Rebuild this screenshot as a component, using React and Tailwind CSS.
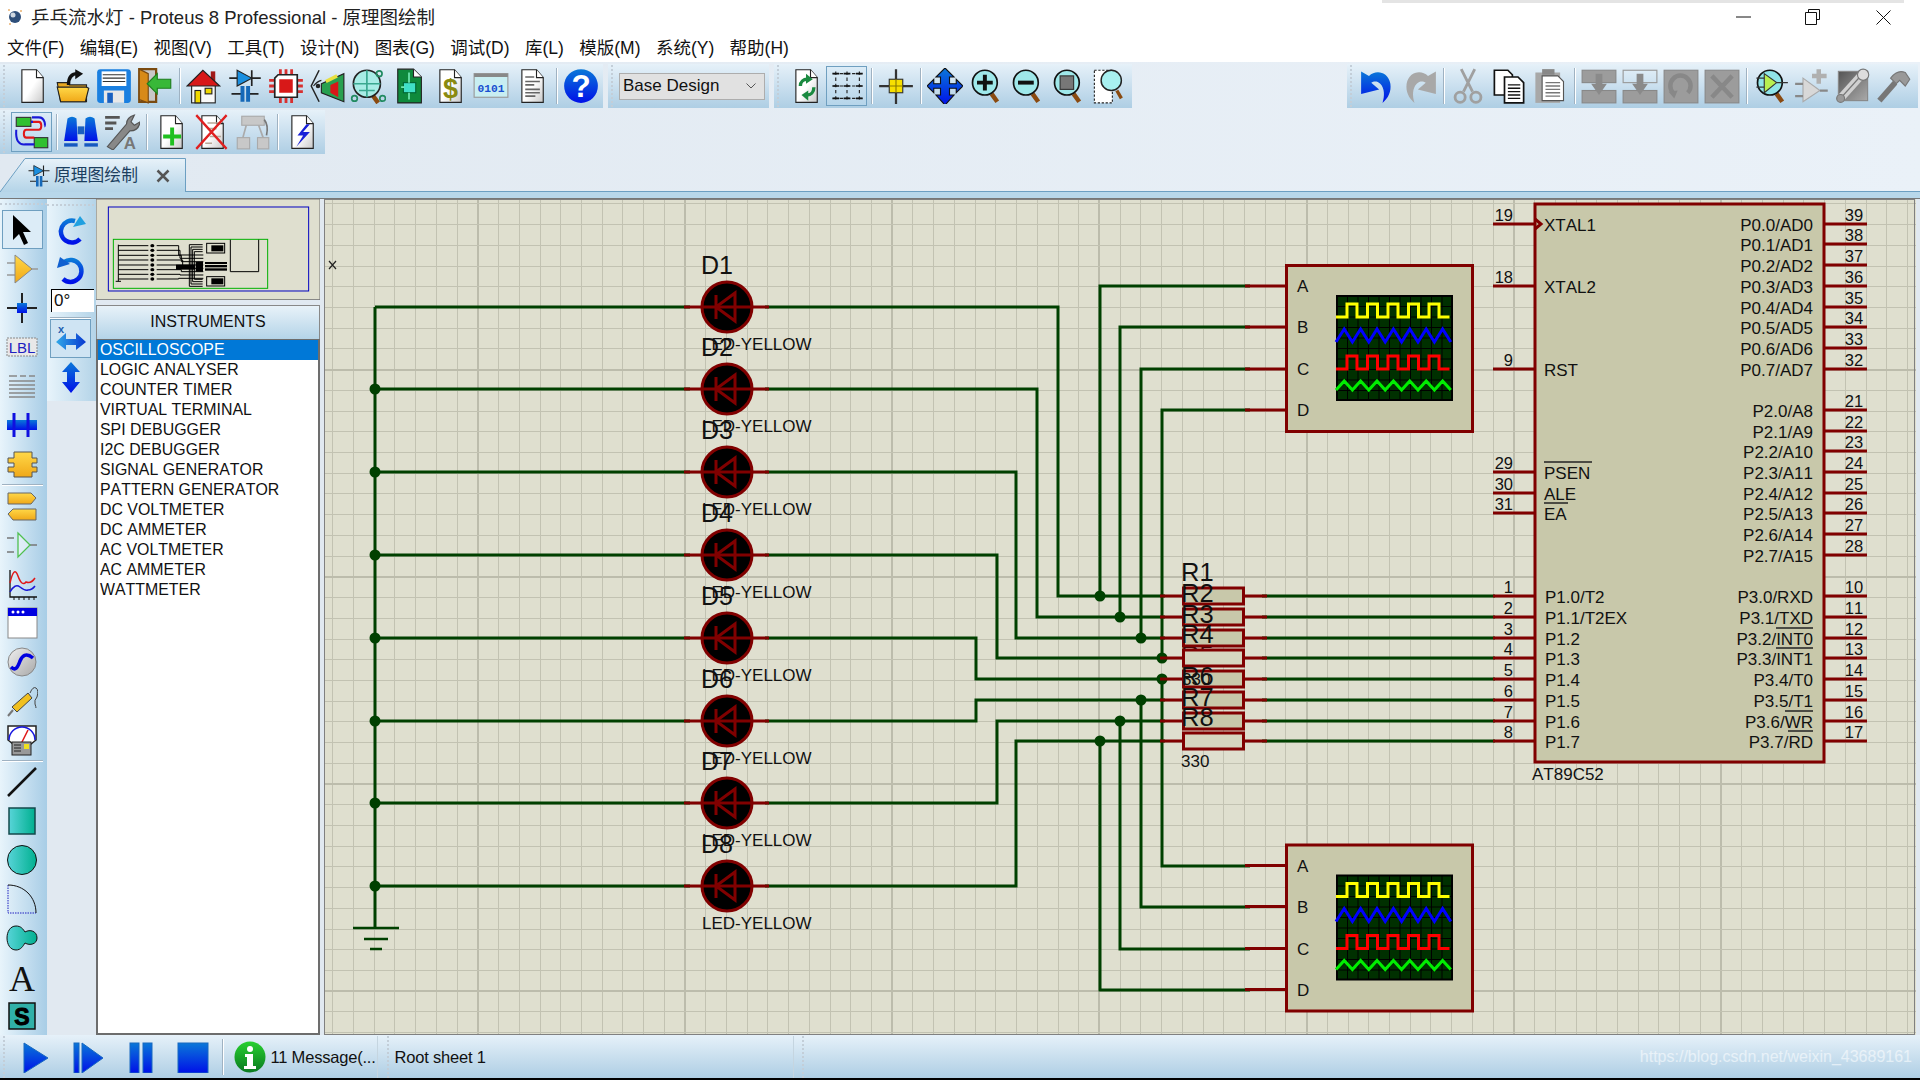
import React from 'react'
import clsx from 'clsx'

const RED = '#800000'
const GREEN = '#004000'

const Ic = ({ children, s = 32 }) => (
  <svg width={s} height={s} viewBox="0 0 32 32" className="shrink-0">{children}</svg>
)

const Page = ({ children }) => (
  <>
    <path d="M7 1.500h13l6 7v22H7z" fill="url(#gPage)" stroke="#222" strokeWidth="1" />
    <path d="M20 1.500v7h6" fill="#fff" stroke="#222" strokeWidth="1" />
    {children}
  </>
)

const Glass = ({ children, fill = '#9fe8ea' }) => (
  <>
    <path d="M21 23l5 7" stroke="#8a4a10" strokeWidth="4" />
    <circle cx="15" cy="13" r="11" fill={fill} stroke="#111" strokeWidth="1.500" />
    {children}
  </>
)

const Schem = () => (
  <>
    <path d="M2 9h28M4 23h9M19 23h9M22 2v14" stroke="#222" strokeWidth="1.500" fill="none" />
    <path d="M9 2l13 7-13 7z" fill="#1a8fe0" stroke="#222" />
    <rect x="12" y="16" width="3.500" height="14" fill="#1568b8" />
    <rect x="17" y="16" width="3.500" height="14" fill="#1568b8" />
  </>
)

const icons = {
  newDoc: <Page />,
  open: (
    <>
      <path d="M2 13h9l2 2h15v15H5z" fill="#e8a820" stroke="#222" />
      <path d="M2 17h26l2 1-3 12H5z" fill="url(#gYel)" stroke="#222" />
      <path d="M12 15c0-7 3-10 8-10" stroke="#111" strokeWidth="3" fill="none" />
      <path d="M18 1l7 4-7 5z" fill="#111" />
    </>
  ),
  save: (
    <>
      <rect x="1" y="1" width="30" height="30" rx="3" fill="#1a7fe0" />
      <rect x="5" y="3" width="22" height="13" fill="#fff" />
      <path d="M6 6h20M6 9h20M6 12h20" stroke="#333" strokeWidth="1" />
      <rect x="7" y="20" width="18" height="11" fill="#e8e8e8" />
      <rect x="10" y="22" width="5" height="9" fill="#1a60c0" />
    </>
  ),
  importBook: (
    <>
      <path d="M2 1h15v29H2z" fill="#c8c8c8" stroke="#7a4a10" strokeWidth="2" />
      <path d="M2 1l8 4v26l-8-3z" fill="#d88a18" stroke="#7a4a10" />
      <path d="M30 10v8H18v5L9 14l9-9v5z" fill="#38b838" stroke="#1e7e1e" />
    </>
  ),
  home: (
    <>
      <rect x="22" y="3" width="4" height="9" fill="#a01818" />
      <rect x="5" y="15" width="21" height="16" fill="#f8f8f8" stroke="#222" />
      <path d="M1 16L15 2l15 14z" fill="#d81818" stroke="#222" />
      <rect x="8" y="20" width="5" height="11" fill="#f0d800" stroke="#222" />
      <rect x="17" y="18" width="6" height="5" fill="#f0d800" stroke="#222" />
    </>
  ),
  schem: <Schem />,
  chip: (
    <>
      <path d="M11 1v6M16 1v6M21 1v6M11 25v6M16 25v6M21 25v6M1 11h6M1 16h6M1 21h6M25 11h6M25 16h6M25 21h6" stroke="#d83030" strokeWidth="2.500" />
      <path d="M9 6h17v20H6V9z" fill="#fff" stroke="#222" strokeWidth="1.500" />
      <rect x="10" y="10" width="12" height="12" fill="#d81818" />
    </>
  ),
  view3d: (
    <>
      <path d="M9 2L2 16l7 14" fill="none" stroke="#222" strokeWidth="1.300" />
      <path d="M4 16q3-4 7-5" fill="none" stroke="#222" />
      <circle cx="8" cy="16" r="2" fill="#222" />
      <path d="M11 14L31 5v25l-20-8z" fill="#28a050" stroke="#222" />
      <path d="M19 15l7-3v14l-7-4z" fill="#d81818" />
      <path d="M15 12l10-5" stroke="#e8e040" strokeWidth="3" />
    </>
  ),
  inspect: (
    <>
      <path d="M20 24l5 7" stroke="#8a4a10" strokeWidth="4" />
      <circle cx="15" cy="14" r="12" fill="#a8ece6" stroke="#222" strokeWidth="1.500" />
      <path d="M15 2v24M3 14h24M8 20h14" stroke="#3aa890" strokeWidth="1.500" />
      <circle cx="26" cy="5" r="2.500" fill="none" stroke="#208a60" strokeWidth="1.500" />
      <circle cx="4" cy="27" r="2.500" fill="none" stroke="#208a60" strokeWidth="1.500" />
      <circle cx="29" cy="27" r="2.500" fill="none" stroke="#208a60" strokeWidth="1.500" />
    </>
  ),
  pcbDoc: (
    <>
      <path d="M6 1h14l7 7v23H6z" fill="#0f8a3c" stroke="#222" />
      <path d="M20 1v7h7" fill="#fff" stroke="#222" />
      <rect x="11" y="13" width="11" height="9" fill="#40e0c8" stroke="#063" />
      <path d="M16 4v9M16 22v6M9 17h3" stroke="#70e8b0" strokeWidth="1.500" />
    </>
  ),
  bom: (
    <Page>
      <text x="16.500" y="27" fontSize="24" fontWeight="700" fill="#8a8a10" textAnchor="middle">$</text>
    </Page>
  ),
  binary: (
    <>
      <rect x="1" y="5" width="30" height="21" fill="#c8eef2" stroke="#999" />
      <rect x="1" y="5" width="30" height="3" fill="#888" />
      <text x="16" y="21" fontSize="10" fontWeight="700" fill="#1a50d0" textAnchor="middle" fontFamily="Liberation Mono">0101</text>
    </>
  ),
  notes: (
    <Page>
      <path d="M10 8h8M10 12h13M10 15h8M10 19h13M10 22h13M10 25h9" stroke="#666" strokeWidth="1.500" />
    </Page>
  ),
  help: (
    <>
      <circle cx="16" cy="16" r="15" fill="url(#gBlue)" />
      <text x="16" y="26" fontSize="28" fontWeight="700" fill="#fff" textAnchor="middle">?</text>
    </>
  ),
  refresh: (
    <Page>
      <path d="M11 16c0-4 3-6 6-6" stroke="#1a8a40" strokeWidth="3" fill="none" />
      <path d="M16 5l6 5-6 4z" fill="#1a8a40" />
      <path d="M23 17c0 5-3 7-6 7" stroke="#1a8a40" strokeWidth="3" fill="none" />
      <path d="M18 29l-6-5 6-4z" fill="#1a8a40" />
    </Page>
  ),
  grid: (
    <>
      <path d="M4 5h26M4 16h26M4 27h26M6 3v26M16 3v26M27 3v26" stroke="#222" strokeWidth="1" strokeDasharray="3 2.500" />
      <path d="M3 5h6M13 5h6M24 5h6M3 16h6M13 16h6M24 16h6M3 27h6M13 27h6M24 27h6" stroke="#111" strokeWidth="1.500" />
    </>
  ),
  origin: (
    <>
      <path d="M16 1v31M1 16h30" stroke="#333" strokeWidth="2" />
      <rect x="10" y="10" width="12" height="12" fill="#f8e000" stroke="#333" />
      <path d="M16 10v12M10 16h12" stroke="#8a7a00" />
    </>
  ),
  pan: (
    <path d="M16 0l8 8h-4v6h6v-4l6 6-6 6v-4h-6v6h4l-8 9-8-9h4v-6H6v4l-6-6 6-6v4h6V8H8z" fill="url(#gBlue)" stroke="#111" />
  ),
  zoomIn: (
    <Glass>
      <path d="M15 6v14M8 13h14" stroke="#111" strokeWidth="3.500" />
    </Glass>
  ),
  zoomOut: (
    <Glass>
      <path d="M8 13h14" stroke="#111" strokeWidth="3.500" />
    </Glass>
  ),
  zoomAll: (
    <Glass>
      <rect x="9" y="7" width="12" height="12" fill="#777" stroke="#333" />
    </Glass>
  ),
  zoomArea: (
    <>
      <rect x="3" y="2" width="16" height="29" fill="#fff" stroke="#222" strokeDasharray="2 1.500" />
      <path d="M23 20l4 7" stroke="#8a4a10" strokeWidth="3" />
      <circle cx="18" cy="11" r="9" fill="#a8f0f0" stroke="#222" strokeWidth="1.300" />
    </>
  ),
  undo: (
    <path d="M1 23V3l7 4C14 1 25 3 27 14c1 7-2 13-7 17 2-6 2-13-2-17-3-3-6-2-8-1l7 6z" fill="url(#gBlue)" />
  ),
  redo: (
    <path d="M31 23V3l-7 4C18 1 7 3 5 14c-1 7 2 13 7 17-2-6-2-13 2-17 3-3 6-2 8-1l-7 6z" fill="#a8a8a8" />
  ),
  cut: (
    <g stroke="#a0a0a0" strokeWidth="2.500" fill="none">
      <path d="M10 1l10 20M22 1L12 21" />
      <ellipse cx="9" cy="26" rx="4.500" ry="4.500" />
      <ellipse cx="23" cy="26" rx="4.500" ry="4.500" />
    </g>
  ),
  copy: (
    <>
      <path d="M3 2h12l4 4v18H3z" fill="#fff" stroke="#111" strokeWidth="1.500" />
      <path d="M12 8h12l5 5v18H12z" fill="#fff" stroke="#111" strokeWidth="1.500" />
      <path d="M15 15h11M15 18h11M15 21h11M15 24h11M15 27h11" stroke="#111" strokeWidth="1.300" />
    </>
  ),
  paste: (
    <>
      <rect x="3" y="4" width="22" height="27" fill="#a8a8a8" />
      <rect x="9" y="1" width="11" height="5" fill="#888" />
      <path d="M9 7h14l5 5v17H9z" fill="#fff" stroke="#555" />
      <path d="M12 13h13M12 16h13M12 19h13M12 22h13M12 25h13" stroke="#777" strokeWidth="1.300" />
    </>
  ),
  blockCopy: (
    <>
      <rect x="1" y="2" width="30" height="11" fill="#9c9c9c" stroke="#888" />
      <rect x="1" y="20" width="30" height="11" fill="#9c9c9c" stroke="#888" />
      <path d="M13 5h6v9h4l-7 10-7-10h4z" fill="#8a8a8a" />
    </>
  ),
  blockMove: (
    <>
      <rect x="1" y="2" width="30" height="11" fill="none" stroke="#999" />
      <rect x="1" y="20" width="30" height="11" fill="#9c9c9c" stroke="#888" />
      <path d="M13 5h6v9h4l-7 10-7-10h4z" fill="#8a8a8a" />
    </>
  ),
  blockRotate: (
    <>
      <rect x="1" y="2" width="30" height="29" fill="#9c9c9c" stroke="#888" />
      <path d="M9 22A9 9 0 1 1 22 22" fill="none" stroke="#888" strokeWidth="4" />
      <path d="M5 21l8-1-3 7z" fill="#888" />
    </>
  ),
  blockDelete: (
    <>
      <rect x="1" y="2" width="30" height="29" fill="#9c9c9c" stroke="#888" />
      <path d="M7 7l18 19M25 7L7 26" stroke="#888" strokeWidth="4" />
    </>
  ),
  pick: (
    <Glass fill="#90e4e8">
      <path d="M10 5l11 8-11 9z" fill="#b8f050" stroke="#333" />
      <path d="M3 9h7M3 17h7M21 13h10" stroke="#333" />
    </Glass>
  ),
  makeDevice: (
    <>
      <path d="M8 9l15 11L8 30z" fill="#d8d8d8" stroke="#aaa" />
      <path d="M1 14h7M1 25h7M23 20h7" stroke="#888" strokeWidth="2" />
      <path d="M22 1v13M16 7h13" stroke="#b0b0b0" strokeWidth="4" />
    </>
  ),
  makePkg: (
    <>
      <rect x="3" y="3" width="26" height="26" fill="url(#gGray)" stroke="#888" />
      <path d="M4 28L22 8" stroke="#d0d0d0" strokeWidth="7" />
      <path d="M4 28L22 8" stroke="#777" strokeWidth="1" />
      <circle cx="25" cy="6" r="5" fill="#ddd" stroke="#777" />
      <circle cx="5" cy="27" r="3.500" fill="#999" stroke="#777" />
    </>
  ),
  decompose: (
    <>
      <path d="M3 29L17 13" stroke="#777" strokeWidth="5" />
      <path d="M13 9q6-8 13-5l4 6-4 6-5-5-3 3z" fill="#999" stroke="#777" />
    </>
  ),
  sheets: (
    <>
      <rect x="2" y="3" width="13" height="8" fill="#30c030" stroke="#333" />
      <rect x="18" y="21" width="12" height="9" fill="#30c030" stroke="#333" />
      <path d="M15 7h7c3 0 3 7 0 7H11c-3 0-3 7 0 7h7" fill="none" stroke="#e01818" strokeWidth="1.800" />
      <path d="M16 6v2M2 14q-1 14 8 13h8" fill="none" stroke="#1818d8" strokeWidth="1.800" />
      <path d="M16 3h6c6 0 6 8 5 8" fill="none" stroke="#1818d8" strokeWidth="1.800" />
    </>
  ),
  binoculars: (
    <>
      <path d="M4 4q4-3 8 0l1 20H1z" fill="url(#gBlue)" />
      <path d="M20 4q4-3 8 0l3 20H19z" fill="url(#gBlue)" />
      <rect x="13" y="11" width="6" height="7" fill="#1a5fc0" />
      <rect x="1" y="26" width="12" height="3" fill="#1558c0" />
      <rect x="19" y="26" width="12" height="3" fill="#1558c0" />
    </>
  ),
  wrenchA: (
    <>
      <path d="M1 3h13M1 8h10M1 13h7" stroke="#555" strokeWidth="2.500" />
      <path d="M3 29L20 9q0-6 7-8l-3 6 3 3 5-3q-1 8-9 8L8 32z" fill="#888" stroke="#555" />
      <text x="23" y="31" fontSize="15" fontWeight="700" fill="#777" textAnchor="middle">A</text>
    </>
  ),
  addSheet: (
    <Page>
      <path d="M17 12v16M9 20h16" stroke="#20c020" strokeWidth="3.500" />
    </Page>
  ),
  delSheet: (
    <Page>
      <path d="M12 8h12M12 13h8M14 20h10M10 26h6" stroke="#b8a898" strokeWidth="1.500" />
      <path d="M2 1l27 30M29 1L2 31" stroke="#e02020" strokeWidth="2" />
    </Page>
  ),
  tree: (
    <>
      <rect x="6" y="2" width="20" height="8" fill="#c8c8c8" stroke="#aaa" />
      <rect x="2" y="21" width="11" height="10" fill="#c8c8c8" stroke="#aaa" />
      <rect x="20" y="21" width="10" height="10" fill="#c8c8c8" stroke="#aaa" />
      <path d="M10 10l-3 11M21 10l4 11" stroke="#aaa" strokeWidth="1.500" />
      <path d="M26 5q4 5 2 14" fill="none" stroke="#777" strokeWidth="1.500" />
    </>
  ),
  bolt: (
    <Page>
      <path d="M20 9l-8 10h5l-6 10 12-13h-6l6-7z" fill="#1820d8" />
    </Page>
  ),
  select: <path d="M7 1v25l6-6 5 11 4-2-5-11h8z" fill="#000" />,
  component: (
    <>
      <path d="M1 10h8M1 22h8M25 16h7" stroke="#999" strokeWidth="1.500" />
      <path d="M9 2l17 14L9 30z" fill="url(#gYel)" stroke="#888" />
    </>
  ),
  junction: (
    <>
      <path d="M16 1v30M1 16h30" stroke="#222" strokeWidth="2" />
      <rect x="11" y="11" width="10" height="10" fill="url(#gBlue)" />
    </>
  ),
  lbl: (
    <>
      <rect x="1" y="7" width="30" height="18" fill="#e8e8e8" stroke="#888" strokeDasharray="2 1" />
      <text x="16" y="22" fontSize="15" fill="#2020c0" textAnchor="middle">LBL</text>
    </>
  ),
  script: <path d="M3 6h8M14 6h6M23 6h6M3 11h26M3 15h26M3 19h26M3 23h26M3 27h26" stroke="#888" strokeWidth="1.500" />,
  bus: (
    <>
      <rect x="1" y="11" width="30" height="10" fill="url(#gBlue)" />
      <path d="M8 4v24M22 4v24" stroke="#1010e0" strokeWidth="3" />
    </>
  ),
  subckt: <path d="M8 4h18v6h5v5h-5v4h5v5h-5v5H8v-5H2v-5h6v-4H2v-5h6z" fill="url(#gYel)" stroke="#555" />,
  terminal: (
    <>
      <path d="M2 3h23l5 5-5 6H2z" fill="url(#gYel)" stroke="#666" />
      <path d="M30 19H7l-5 5 5 6h23z" fill="url(#gYel)" stroke="#666" />
    </>
  ),
  devicePin: (
    <>
      <path d="M1 9h7M1 23h7M24 16h7" stroke="#777" strokeWidth="1.500" />
      <path d="M12 4l12 12-12 12z" fill="#fff" fillOpacity="0.400" stroke="#50c050" strokeWidth="1.300" />
    </>
  ),
  graph: (
    <>
      <path d="M4 2v27h27" stroke="#111" strokeWidth="1.300" fill="none" />
      <path d="M4 15q4-18 8-7t8 6q5 2 9-4" stroke="#e01818" strokeWidth="1.500" fill="none" />
      <path d="M4 24q5-9 10-5t8 3q4 0 7-4" stroke="#1818d8" strokeWidth="1.500" fill="none" />
      <path d="M8 29v3M13 29v3M18 29v3M23 29v3M28 29v3" stroke="#111" />
    </>
  ),
  window: (
    <>
      <rect x="2" y="1" width="29" height="30" fill="#fff" stroke="#888" />
      <rect x="2" y="1" width="29" height="8" fill="#0000e0" />
      <circle cx="7" cy="5" r="1.500" fill="#fff" />
      <circle cx="12" cy="5" r="1.500" fill="#fff" />
      <circle cx="17" cy="5" r="1.500" fill="#fff" />
    </>
  ),
  generator: (
    <>
      <circle cx="16" cy="16" r="14" fill="url(#gGray2)" stroke="#888" />
      <path d="M5 21c5 5 7-1 9-6s6-9 13-3" fill="none" stroke="#0000e0" strokeWidth="3.500" />
    </>
  ),
  probe: (
    <>
      <path d="M2 31l5-6" stroke="#777" strokeWidth="2" />
      <path d="M6 22L22 8l4 5-15 14z" fill="#f0c020" stroke="#444" />
      <path d="M24 8q3-7 6-5t1 9q-3 3-2 7 1 3 1 4" fill="none" stroke="#444" />
    </>
  ),
  meter: (
    <>
      <path d="M2 2h28v14l-5 4H7l-5-4z" fill="#fff" stroke="#222" strokeWidth="1.500" />
      <path d="M3 16a13 13 0 0 1 26 0" fill="none" stroke="#1818e0" strokeWidth="1.500" />
      <path d="M15 20L22 6" stroke="#e01818" strokeWidth="1.500" />
      <rect x="6" y="18" width="19" height="13" fill="#999" stroke="#222" />
      <rect x="18" y="20" width="5" height="5" fill="#f0e020" />
      <path d="M8 21h7M8 24h7M8 27h7" stroke="#222" />
    </>
  ),
  line: <path d="M2 30L30 2" stroke="#111" strokeWidth="2.500" />,
  box: <rect x="3" y="3" width="26" height="26" fill="url(#gTeal)" stroke="#14494c" strokeWidth="1.500" />,
  circle: <circle cx="16" cy="16" r="14.500" fill="url(#gTeal)" stroke="#111" />,
  arc: (
    <>
      <path d="M2 2v28h28" fill="none" stroke="#2020c0" strokeDasharray="1.500 1" />
      <path d="M2 2c16 0 28 12 28 28" fill="none" stroke="#111" />
    </>
  ),
  path: <path d="M10 4c5 0 7 3 9 6 5-3 12-1 12 6 0 6-7 8-12 5-2 3-4 7-9 7C4 28 1 22 1 16S4 4 10 4z" fill="url(#gTeal)" stroke="#111" />,
  text: <text x="16" y="30" fontSize="36" textAnchor="middle" fontFamily="Liberation Serif" fill="#111">A</text>,
  symbol: (
    <>
      <rect x="3" y="3" width="26" height="26" fill="#30b0a8" stroke="#111" strokeWidth="1.500" />
      <text x="16" y="25" fontSize="23" fontWeight="900" textAnchor="middle" fill="#000" stroke="#000">S</text>
    </>
  ),
  rotCw: (
    <>
      <path d="M25 24A11 11 0 1 1 20 6" fill="none" stroke="url(#gBlue)" strokeWidth="4.500" />
      <path d="M18 12l13-3-6-8z" fill="#20a0e0" />
    </>
  ),
  rotCcw: (
    <>
      <path d="M9 8a11 11 0 1 1-1 17" fill="none" stroke="url(#gBlue)" strokeWidth="4.500" />
      <path d="M2 14l3-11 10 7z" fill="#1060d0" />
    </>
  ),
  mirrorX: (
    <>
      <text x="6" y="10" fontSize="11" fontWeight="700" fill="#2060b0" textAnchor="middle">x</text>
      <path d="M1 19l10-9v6h10v-6l10 9-10 8v-5H11v5z" fill="url(#gH)" />
    </>
  ),
  mirrorY: <path d="M16 1l9 10h-5v10h5L16 32 7 21h5V11H7z" fill="url(#gBlue)" />,
  play: <path d="M3 2l24 15L3 32z" fill="url(#gBlue)" stroke="#1868c0" />,
  step: (
    <>
      <rect x="1" y="2" width="5" height="30" fill="url(#gBlue)" stroke="#1868c0" />
      <path d="M9 2l21 15L9 32z" fill="url(#gBlue)" stroke="#1868c0" />
    </>
  ),
  pause: (
    <>
      <rect x="5" y="2" width="9" height="30" fill="url(#gBlue)" stroke="#1868c0" />
      <rect x="18" y="2" width="9" height="30" fill="url(#gBlue)" stroke="#1868c0" />
    </>
  ),
  stop: <rect x="1" y="2" width="30" height="30" fill="url(#gBlue)" stroke="#1868c0" />,
  info: (
    <>
      <circle cx="16" cy="16" r="15.500" fill="url(#gGreen)" />
      <circle cx="16" cy="8" r="3" fill="#fff" />
      <path d="M11 13h8v12h3v3H10v-3h3v-9h-2z" fill="#fff" />
    </>
  ),
}

const Tool = ({ name, active }) => (
  <div
    className={clsx(
      'flex h-[40px] w-[41px] shrink-0 items-center justify-center',
      active && 'border border-[#6f9fc0] bg-linear-to-b from-[#dcecf7] to-[#b6d5ea]',
    )}
  >
    <Ic s={36}>{icons[name]}</Ic>
  </div>
)

const Sep = () => (
  <div className="flex h-[36px] w-[8px] shrink-0 justify-center">
    <div className="w-px bg-[#9fb2c2] shadow-[1px_0_0_#fff]" />
  </div>
)

const Grip = ({ className }) => (
  <div className={clsx('h-full w-[3px] shrink-0 border-l-2 border-dotted border-[#c3ced8]', className)} />
)

const Bar = ({ className, children }) => (
  <div className={clsx('flex h-[44px] shrink-0 items-center bg-linear-to-b from-[#e6f1f9] to-[#aecee4] py-px', className)}>
    {children}
  </div>
)

const ToolRun = ({ items }) =>
  items.map((it, i) => (it === '|' ? <Sep key={i} /> : <Tool key={i} name={it} active={it === 'grid' || it === 'sheets'} />))

const menus = ['文件(F)', '编辑(E)', '视图(V)', '工具(T)', '设计(N)', '图表(G)', '调试(D)', '库(L)', '模版(M)', '系统(Y)', '帮助(H)']

const instruments = [
  'OSCILLOSCOPE', 'LOGIC ANALYSER', 'COUNTER TIMER', 'VIRTUAL TERMINAL', 'SPI DEBUGGER', 'I2C DEBUGGER',
  'SIGNAL GENERATOR', 'PATTERN GENERATOR', 'DC VOLTMETER', 'DC AMMETER', 'AC VOLTMETER', 'AC AMMETER', 'WATTMETER',
]

// left mode toolbar, null is a separator
const modeTools = [
  'select', 'component', 'junction', 'lbl', 'script', 'bus', 'subckt', null,
  'terminal', 'devicePin', 'graph', 'window', 'generator', 'probe', 'meter', null,
  'line', 'box', 'circle', 'arc', 'path', 'text', 'symbol',
]

const diodeYs = [307, 389, 472, 555, 638, 721, 803, 886]
const rowYs = [596, 617, 638, 658, 679, 700, 721, 741]
const turnXs = [1058, 1037, 1016, 997, 976, 976, 997, 1016]
const busXs = [1100, 1120, 1141, 1162]
const busYs = [
  [286, 596, 741, 990],
  [327, 617, 721, 949],
  [369, 638, 700, 907],
  [410, 658, 679, 866],
]

const p0 = ['P0.0/AD0', 'P0.1/AD1', 'P0.2/AD2', 'P0.3/AD3', 'P0.4/AD4', 'P0.5/AD5', 'P0.6/AD6', 'P0.7/AD7']
const p0y = [224, 244, 265, 286, 307, 327, 348, 369]
const p2 = ['P2.0/A8', 'P2.1/A9', 'P2.2/A10', 'P2.3/A11', 'P2.4/A12', 'P2.5/A13', 'P2.6/A14', 'P2.7/A15']
const p2y = [410, 431, 451, 472, 493, 513, 534, 555]
const p1 = ['P1.0/T2', 'P1.1/T2EX', 'P1.2', 'P1.3', 'P1.4', 'P1.5', 'P1.6', 'P1.7']
const p3 = ['P3.0/RXD', 'P3.1/TXD', 'P3.2/INT0', 'P3.3/INT1', 'P3.4/T0', 'P3.5/T1', 'P3.6/WR', 'P3.7/RD']
const leftPins = [
  ['19', 'XTAL1', 224],
  ['18', 'XTAL2', 286],
  ['9', 'RST', 369],
  ['29', 'PSEN', 472],
  ['30', 'ALE', 493],
  ['31', 'EA', 513],
]
const overbars = [
  [1544, 1592, 462],
  [1544, 1568, 503],
  [1776, 1813, 628],
  [1776, 1813, 648],
  [1785, 1813, 711],
  [1788, 1813, 731],
]

const gridX = Array.from({ length: 78 }, (_, i) => 312.1 + i * 20.72)
const gridY = Array.from({ length: 42 }, (_, i) => 203.9 + i * 20.72)

const T = ({ x, y, size = 17, anchor = 'start', children }) => (
  <text x={x} y={y} fontSize={size} textAnchor={anchor} fill="#111">
    {children}
  </text>
)

const square = (x0, low, high) => {
  let d = `M${x0} ${low}h11`
  for (let i = 0; i < 5; i++) d += `V${high}h10V${low}h10.500`
  return d
}

const zigzag = (x0, a, b) => {
  let d = `M${x0} ${b}`
  for (let i = 0; i < 14; i++) d += `L${x0 + (i + 1) * 8.2} ${i % 2 ? b : a}`
  return d
}

const Scope = ({ dy }) => (
  <g transform={`translate(0 ${dy})`}>
    {[286, 327, 369, 410].map((y) => (
      <path key={y} d={`M1245 ${y}H1286`} stroke={RED} strokeWidth="3" />
    ))}
    <rect x="1286.500" y="265.500" width="186" height="166" fill="#c8c8aa" stroke={RED} strokeWidth="3" />
    {['A', 'B', 'C', 'D'].map((l, i) => (
      <T key={l} x="1297" y={[292, 333, 375, 416][i]}>{l}</T>
    ))}
    <rect x="1337" y="296" width="115" height="104" fill="#003000" stroke="#000" strokeWidth="2" />
    <path
      d={
        Array.from({ length: 10 }, (_, i) => `M${1347.500 + i * 10.500} 296V400`).join('') +
        Array.from({ length: 9 }, (_, i) => `M1337 ${306.500 + i * 10.500}H1452`).join('')
      }
      stroke="#000"
      strokeWidth="1"
    />
    <path d={square(1336, 317, 304)} stroke="#ffff00" strokeWidth="3" fill="none" />
    <path d={zigzag(1336, 329, 342)} stroke="#0000ff" strokeWidth="3" fill="none" />
    <path d={square(1336, 369, 356)} stroke="#ff0000" strokeWidth="3" fill="none" />
    <path d={zigzag(1336, 381, 390)} stroke="#00ee00" strokeWidth="3" fill="none" />
  </g>
)

const Schematic = () => (
  <svg viewBox="324 199 1592 836" width="1592" height="836" className="block [font-kerning:none]">
    <rect x="324" y="199" width="1592" height="836" fill="#dfdfcf" />
    <g shapeRendering="crispEdges">
      {gridX.map((x, i) => (
        <path key={i} d={`M${x} 199V1035`} stroke={i % 10 === 8 ? '#bcbcac' : '#c2c2b2'} strokeWidth={i % 10 === 8 ? 2 : 1} />
      ))}
      {gridY.map((y, i) => (
        <path key={i} d={`M324 ${y}H1916`} stroke={i % 10 === 8 ? '#bcbcac' : '#c2c2b2'} strokeWidth={i % 10 === 8 ? 2 : 1} />
      ))}
    </g>

    <path d="M329 261l7 8M336 261l-7 8" stroke="#222" strokeWidth="1.200" />

    {/* wires */}
    <g fill="none" stroke={GREEN} strokeWidth="3">
      <path d="M375 307V928" />
      {diodeYs.map((y, i) => (
        <path key={i} d={`M375 ${y}H690M765 ${y}H${turnXs[i]}V${rowYs[i]}H1165`} />
      ))}
      {rowYs.map((y) => (
        <path key={y} d={`M1262 ${y}H1495`} />
      ))}
      {busXs.map((x, i) => (
        <path key={x} d={`M1250 ${busYs[i][0]}H${x}V${busYs[i][1]}M${x} ${busYs[i][2]}V${busYs[i][3]}H1250`} />
      ))}
    </g>
    {diodeYs.slice(1).map((y) => (
      <circle key={y} cx="375" cy={y} r="5.500" fill={GREEN} />
    ))}
    {busXs.map((x, i) => (
      <g key={x} fill={GREEN}>
        <circle cx={x} cy={busYs[i][1]} r="5.500" />
        <circle cx={x} cy={busYs[i][2]} r="5.500" />
      </g>
    ))}
    <path d="M353 928H399M364 939H388M370 949H382" stroke={GREEN} strokeWidth="2.500" />

    {/* leds */}
    {diodeYs.map((y, i) => (
      <g key={y}>
        <T x="702" y={y + 43}>LED-YELLOW</T>
        <circle cx="727" cy={y} r="25" fill="#000" stroke={RED} strokeWidth="3" />
        <path d={`M684 ${y}H769`} stroke={RED} strokeWidth="3" />
        <path d={`M716 ${y - 12}V${y + 12}M735 ${y - 14}L716 ${y}L735 ${y + 14}Z`} stroke={RED} strokeWidth="3" fill="none" />
        <T x="701" y={y - 33} size={25}>{`D${i + 1}`}</T>
      </g>
    ))}

    {/* resistors */}
    <T x="1181" y="581" size={25.5}>R1</T>
    <T x="1181" y="664" size={25.5}>R5</T>
    {rowYs.map((y) => (
      <g key={y}>
        <path d={`M1160 ${y}H1267`} stroke={RED} strokeWidth="3" />
        <rect
          x="1183.500"
          y={y - 8}
          width="60"
          height="16"
          fill={y === 658 || y === 741 ? '#d6d6c0' : '#c8c8aa'}
          stroke={RED}
          strokeWidth="3"
        />
      </g>
    ))}
    <T x="1182" y="685">330</T>
    {[['R2', 601.5], ['R3', 622.5], ['R4', 643], ['R6', 685], ['R7', 705.5], ['R8', 726]].map(([l, y]) => (
      <T key={l} x="1181" y={y} size={25.5}>{l}</T>
    ))}
    <T x="1181" y="767">330</T>

    <Scope dy={0} />
    <Scope dy={579.500} />

    {/* chip */}
    {[...leftPins.map((p) => p[2]), ...rowYs].map((y) => (
      <path key={y} d={`M1493 ${y}H1535`} stroke={RED} strokeWidth="3" />
    ))}
    {[...p0y, ...p2y, ...rowYs].map((y, i) => (
      <path key={i} d={`M1824 ${y}H1867`} stroke={RED} strokeWidth="3" />
    ))}
    <rect x="1535" y="204" width="289" height="558" fill="#c8c8aa" stroke={RED} strokeWidth="3" />
    <path d="M1535 219l6 5-6 5" fill="none" stroke={RED} strokeWidth="3" />
    {leftPins.map(([n, l, y]) => (
      <g key={n}>
        <T x="1513" y={y - 3} size={16.5} anchor="end">{n}</T>
        <T x="1544" y={y + 7}>{l}</T>
      </g>
    ))}
    {p1.map((l, i) => (
      <g key={l}>
        <T x="1513" y={rowYs[i] - 3} size={16.5} anchor="end">{`${i + 1}`}</T>
        <T x="1545" y={rowYs[i] + 7}>{l}</T>
      </g>
    ))}
    {[[p0, p0y, 39, -1], [p2, p2y, 21, 1], [p3, rowYs, 10, 1]].map(([labels, ys, start, dir]) =>
      labels.map((l, i) => (
        <g key={l}>
          <T x="1813" y={ys[i] + 7} anchor="end">{l}</T>
          <T x="1854" y={ys[i] - 3} size={16.5} anchor="middle">{`${start + dir * i}`}</T>
        </g>
      )),
    )}
    {overbars.map(([a, b, y]) => (
      <path key={y} d={`M${a} ${y}H${b}`} stroke="#222" strokeWidth="1.500" />
    ))}
    <T x="1532" y="780">AT89C52</T>
    <rect x="324.500" y="199.500" width="1590" height="835" fill="none" stroke="#808080" />
  </svg>
)

const Overview = () => (
  <svg viewBox="288 28 672 302" width="224" height="100.670" className="block">
    <rect x="288" y="28" width="672" height="302" fill="#dfdfcf" stroke="#777" strokeWidth="3" />
    <rect x="325" y="52" width="601" height="252" fill="none" stroke="#0000c0" strokeWidth="3" />
    <rect x="340" y="149" width="463" height="147" fill="none" stroke="#00b000" strokeWidth="3" />
    <g stroke="#000" strokeWidth="3" fill="none">
      <path d="M691 150V246H776V150M355 165V275M347 275H363" />
      {[168, 182, 197, 211, 226, 240, 254, 268].map((y, i) => (
        <path key={y} d={`M355 ${y}H445M470 ${y}H${550 - Math.abs(i - 3.500) * 4}V${196 + i * 10}H610`} />
      ))}
      {[165, 172, 179, 186].map((y, i) => (
        <path key={y} d={`M608 ${y}H${568 + i * 5}V${290 - i * 7}H608`} />
      ))}
      <rect x="620" y="161" width="54" height="29" />
      <rect x="620" y="261" width="54" height="28" />
    </g>
    {[168, 182, 197, 211, 226, 240, 254, 268].map((y) => (
      <ellipse key={y} cx="457" cy={y} rx="6" ry="5" fill="#000" />
    ))}
    <rect x="634" y="167" width="36" height="18" fill="#000" />
    <rect x="634" y="266" width="36" height="18" fill="#000" />
    <rect x="528" y="225" width="57" height="15" fill="#000" />
    <rect x="587" y="217" width="22" height="29" fill="#000" />
    <rect x="615" y="217" width="66" height="6" fill="#000" />
    <rect x="615" y="226" width="66" height="7" fill="#000" />
    <rect x="615" y="236" width="66" height="7" fill="#000" />
  </svg>
)

export default function App() {
  return (
    <div className="relative flex h-[1080px] w-[1920px] flex-col overflow-hidden bg-white font-['Liberation_Sans','Noto_Sans_CJK_SC',sans-serif] text-[#111]">
      <svg className="absolute h-0 w-0">
        <defs>
          <linearGradient id="gPage" x1="0" y1="0" x2="1" y2="1">
            <stop offset="0.500" stopColor="#fff" />
            <stop offset="1" stopColor="#c8c8c8" />
          </linearGradient>
          <linearGradient id="gBlue" x1="0" y1="0" x2="0" y2="1">
            <stop offset="0" stopColor="#0a78d8" />
            <stop offset="1" stopColor="#0010e8" />
          </linearGradient>
          <linearGradient id="gH" x1="0" y1="0" x2="1" y2="0">
            <stop offset="0" stopColor="#30a8e8" />
            <stop offset="1" stopColor="#0838d0" />
          </linearGradient>
          <linearGradient id="gYel" x1="0" y1="0" x2="0" y2="1">
            <stop offset="0" stopColor="#ffd848" />
            <stop offset="1" stopColor="#f0a818" />
          </linearGradient>
          <linearGradient id="gTeal" x1="0" y1="0" x2="1" y2="0">
            <stop offset="0" stopColor="#58d4d8" />
            <stop offset="1" stopColor="#00b090" />
          </linearGradient>
          <linearGradient id="gGreen" x1="0" y1="0" x2="0" y2="1">
            <stop offset="0" stopColor="#28d030" />
            <stop offset="1" stopColor="#0a7a20" />
          </linearGradient>
          <linearGradient id="gGray" x1="0" y1="0" x2="1" y2="1">
            <stop offset="0" stopColor="#555" />
            <stop offset="1" stopColor="#aaa" />
          </linearGradient>
          <linearGradient id="gGray2" x1="0" y1="0" x2="1" y2="1">
            <stop offset="0" stopColor="#f0f0f0" />
            <stop offset="1" stopColor="#a8a8a8" />
          </linearGradient>
        </defs>
      </svg>

      {/* shadow of another window, top edge */}
      <div className="absolute left-[1382px] top-0 h-[3px] w-[522px] bg-[#e4e4e4]" />

      {/* title bar */}
      <div className="flex h-[34px] shrink-0 items-center pl-[7px]">
        <svg width="16" height="18" viewBox="0 0 16 18" className="mr-[8px]">
          <circle cx="8" cy="9" r="6" fill="#2f4f7a" />
          <circle cx="6" cy="7" r="2.500" fill="#cfd8e2" />
          <circle cx="2" cy="2" r="1" fill="#e8b070" />
          <circle cx="14" cy="3" r="1" fill="#e8b070" />
          <circle cx="3" cy="16" r="1" fill="#e8b070" />
        </svg>
        <span className="mt-[2px] text-[18.5px] text-[#222]">乒乓流水灯 - Proteus 8 Professional - 原理图绘制</span>
        <div className="ml-auto flex items-center pr-[29px]">
          <svg width="15" height="2" className="mr-[54px]">
            <path d="M0 1h15" stroke="#111" />
          </svg>
          <svg width="15" height="16" className="mr-[56px]">
            <path d="M3.500 3.500V.500h11v10h-3M.500 3.500h11v12H.500z" fill="none" stroke="#111" />
          </svg>
          <svg width="15" height="15">
            <path d="M.500.500l14 14M14.500.500l-14 14" stroke="#111" />
          </svg>
        </div>
      </div>

      {/* menu bar */}
      <div className="flex h-[28px] shrink-0 items-center gap-[15.4px] pl-[7px] pt-[2px] text-[17.5px] leading-none text-[#111]">
        {menus.map((m) => (
          <span key={m}>{m}</span>
        ))}
      </div>

      {/* toolbars */}
      <div className="flex h-[130px] shrink-0 flex-col bg-linear-to-r from-[#e1e9f1] to-[#eaf1f8]">
        <div className="mt-[2px] flex h-[44px] shrink-0">
          <Bar className="w-[603px]">
            <Grip className="ml-[3px] mr-[5px]" />
            <ToolRun items={['newDoc', 'open', 'save', 'importBook', '|', 'home', 'schem', 'chip', 'view3d', 'inspect', 'pcbDoc', 'bom', 'binary', 'notes', '|', 'help']} />
          </Bar>
          <Bar className="ml-[5px] w-[161px]">
            <Grip className="ml-[3px]" />
            <div className="ml-[5px] flex h-[27px] w-[146px] items-center justify-between border border-[#adadad] bg-[#e1e1e1] pl-[3px] pr-[8px] text-[17px]">
              Base Design
              <svg width="10" height="6">
                <path d="M.500.500L5 5 9.500.500" fill="none" stroke="#555" />
              </svg>
            </div>
          </Bar>
          <Bar className="ml-[5px] w-[358px]">
            <Grip className="ml-[3px] mr-[5px]" />
            <ToolRun items={['refresh', 'grid', '|', 'origin', '|', 'pan', 'zoomIn', 'zoomOut', 'zoomAll', 'zoomArea']} />
          </Bar>
          <Bar className="ml-[215px] w-[570.5px]">
            <Grip className="ml-[3px] mr-[4.5px]" />
            <ToolRun items={['undo', 'redo', '|', 'cut', 'copy', 'paste', '|', 'blockCopy', 'blockMove', 'blockRotate', 'blockDelete', '|', 'pick', 'makeDevice', 'makePkg', 'decompose']} />
          </Bar>
        </div>
        <div className="mt-[2px] flex h-[44px] shrink-0">
          <Bar className="w-[325px]">
            <Grip className="ml-[3px] mr-[5px]" />
            <ToolRun items={['sheets', '|', 'binoculars', 'wrenchA', '|', 'addSheet', 'delSheet', 'tree', '|', 'bolt']} />
          </Bar>
        </div>
        <div className="mt-[4px] flex h-[34px] shrink-0 items-stretch">
          <div className="relative flex w-[186px] items-center pl-[27px]">
            <svg className="absolute inset-0" width="186" height="34" viewBox="0 0 186 34">
              <defs>
                <linearGradient id="gTab" x1="0" y1="0" x2="0" y2="1">
                  <stop offset="0" stopColor="#e8f2f9" />
                  <stop offset="1" stopColor="#b4d4e8" />
                </linearGradient>
              </defs>
              <path d="M0 34L25 .500H185.500V34" fill="url(#gTab)" stroke="#6c9fc2" />
            </svg>
            <div className="relative mt-[2px] flex items-center">
              <Ic s={24}><Schem /></Ic>
              <span className="ml-[3px] w-[84px] whitespace-nowrap text-[16.8px] text-[#1c3f60]">原理图绘制</span>
              <svg width="14" height="14" className="ml-[18px]">
                <path d="M1.500 1.500l11 11M12.500 1.500l-11 11" stroke="#555" strokeWidth="2.500" />
              </svg>
            </div>
          </div>
          <div className="flex-1 border-b border-[#6c9fc2]" />
        </div>
      </div>

      {/* main */}
      <div className="flex min-h-0 flex-1 flex-col bg-[#e1e9f1]">
        <div className="h-[6px] shrink-0 bg-[#b8d7ea]" />
        <div className="h-px shrink-0 bg-[#777]" />
        <div className="flex min-h-0 flex-1">
          <div className="flex w-[47px] shrink-0 flex-col items-center bg-linear-to-r from-[#e8f4fb] to-[#a8cde6] pt-[4px]">
            <div className="mb-[5px] w-full border-t-2 border-dotted border-[#c3ced8]" />
            {modeTools.map((t, i) =>
              t ? (
                <div key={i} className="flex h-[39px] w-full shrink-0 items-center justify-center pr-[3px]">
                  <div className={clsx('flex h-[39px] w-[41px] items-center justify-center', t === 'select' && 'border border-[#6f9fc0] bg-[#dcecf7]')}>
                    <Ic>{icons[t]}</Ic>
                  </div>
                </div>
              ) : (
                <div key={i} className="my-[1px] mr-[3px] h-px w-[41px] shrink-0 bg-[#9fb2c2] shadow-[0_1px_0_#fff]" />
              ),
            )}
          </div>
          <div className="flex w-[49px] shrink-0 flex-col">
            <div className="flex h-[202px] flex-col items-center bg-linear-to-r from-[#e8f4fb] to-[#b4d4e8] pt-[5px] pr-[2px]">
              <div className="w-full border-t-2 border-dotted border-[#c3ced8]" />
              <div className="mt-[5px] flex h-[39px] items-center"><Ic>{icons.rotCw}</Ic></div>
              <div className="flex h-[39px] items-center"><Ic>{icons.rotCcw}</Ic></div>
              <div className="ml-[4px] h-[23px] w-[43px] border-l border-t border-black bg-white pl-[2px] text-[17px] leading-[21px]">0°</div>
              <div className="mt-[5px] h-px w-[41px] bg-[#9fb2c2] shadow-[0_1px_0_#fff]" />
              <div className="mt-[1px] flex h-[39px] w-[41px] items-center justify-center border border-[#6f9fc0] bg-[#cfe4f3]"><Ic>{icons.mirrorX}</Ic></div>
              <div className="flex h-[38px] items-center"><Ic>{icons.mirrorY}</Ic></div>
            </div>
          </div>
          <div className="flex w-[224px] shrink-0 flex-col">
            <Overview />
            <div className="mt-[5px] flex h-[34px] shrink-0 items-center justify-center border-x border-t border-[#888] bg-linear-to-b from-[#e8f2f9] to-[#b4d4e8] text-[16px] leading-none">
              INSTRUMENTS
            </div>
            <div className="min-h-0 flex-1 border-2 border-t border-[#6d6d6d] bg-white">
              {instruments.map((name, i) => (
                <div
                  key={name}
                  className={clsx('h-[20px] pl-[2px] text-[15.9px] leading-[20px] [font-kerning:none]', i === 0 ? 'bg-[#0078d7] text-white' : 'text-[#111]')}
                >
                  {name}
                </div>
              ))}
            </div>
          </div>
          <div className="ml-[4px] min-w-0 flex-1 overflow-hidden">
            <Schematic />
          </div>
        </div>
      </div>

      {/* status bar */}
      <div className="flex h-[45px] shrink-0 flex-col">
        <div className="flex min-h-0 flex-1 items-center bg-linear-to-b from-[#e6f1f9] to-[#aecee4] pt-[1px]">
          <Grip className="ml-[3px] mr-[5px]" />
          <div className="flex w-[52px] justify-center"><Ic>{icons.play}</Ic></div>
          <div className="flex w-[52px] justify-center"><Ic>{icons.step}</Ic></div>
          <div className="flex w-[52px] justify-center"><Ic>{icons.pause}</Ic></div>
          <div className="flex w-[52px] justify-center"><Ic>{icons.stop}</Ic></div>
          <div className="ml-[3px] h-[36px] w-px bg-[#9fb2c2] shadow-[1px_0_0_#fff]" />
          <div className="ml-[11px]"><Ic>{icons.info}</Ic></div>
          <span className="ml-[4.500px] w-[106px] whitespace-nowrap text-[16.5px] tracking-[-0.2px]">11 Message(...</span>
          <div className="h-full w-px bg-[#c5d5e0]" />
          <Grip className="ml-[9px]" />
          <span className="ml-[5px] w-[398px] text-[16.5px] tracking-[-0.2px]">Root sheet 1</span>
          <div className="h-full w-px bg-[#c5d5e0]" />
          <Grip className="ml-[8px]" />
          <span className="ml-auto pr-[8px] text-[16px] text-white/55">https://blog.csdn.net/weixin_43689161</span>
        </div>
        <div className="h-[2px] shrink-0 bg-black" />
      </div>
    </div>
  )
}
